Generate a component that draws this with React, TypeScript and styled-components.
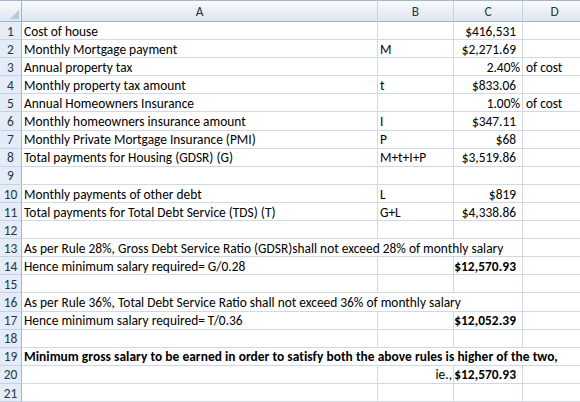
import React from "react";
import styled, { createGlobalStyle } from "styled-components";

const Global = createGlobalStyle`
  html, body { margin: 0; padding: 0; background: #ffffff; }
  body { width: 580px; height: 402px; overflow: hidden; }
`;

const FONT = `Carlito, Calibri, Lato, "Open Sans", sans-serif`;

const Sheet = styled.div`
  display: grid;
  grid-template-columns: 22px 356px 76px 69px 64px;
  grid-template-rows: 22px;
  grid-auto-rows: 18.1px;
  width: 587px;
  font-family: ${FONT};
  font-size: 13.4px;
  color: #000;
  background: #fff;
`;

const Corner = styled.div`
  position: relative;
  box-sizing: border-box;
  border-top: 1px solid #a2b8d2;
  border-right: 1px solid #9eb6ce;
  border-bottom: 1px solid #9eb6ce;
  background: linear-gradient(#f7f9fc, #dfe6f0);
  &::after {
    content: "";
    position: absolute;
    right: 2px;
    bottom: 2px;
    width: 0;
    height: 0;
    border-left: 9px solid transparent;
    border-bottom: 9px solid #b9c8da;
  }
`;

const ColHeader = styled.div`
  box-sizing: border-box;
  border-top: 1px solid #a2b8d2;
  border-right: 1px solid #c5d2e2;
  border-bottom: 1px solid #9eb6ce;
  background: linear-gradient(#f9fbfd, #dde5f0);
  display: flex;
  align-items: center;
  justify-content: center;
  color: #27364a;
  padding-top: 1px;
`;

const RowHeader = styled.div`
  box-sizing: border-box;
  background: #e4ecf7;
  border-right: 1px solid #9eb6ce;
  border-bottom: 1px solid #c4d3e6;
  display: flex;
  align-items: flex-end;
  justify-content: center;
  padding-bottom: 1px;
  color: #27364a;
  line-height: 1;
  height: 100%;
`;

const Cell = styled.div<{ $span?: number; $align?: "left" | "right"; $bold?: boolean; $pad?: number }>`
  box-sizing: border-box;
  grid-column: span ${(p) => p.$span ?? 1};
  border-right: 1px solid #d0d7e5;
  border-bottom: 1px solid #d0d7e5;
  display: flex;
  align-items: flex-end;
  justify-content: ${(p) => (p.$align === "right" ? "flex-end" : "flex-start")};
  padding: 0 ${(p) => (p.$align === "right" ? (p.$pad ?? 6) : 0)}px 1px ${(p) => (p.$align === "right" ? 0 : p.$pad ?? 2)}px;
  font-weight: ${(p) => (p.$bold ? 700 : 400)};
  letter-spacing: ${(p) => (p.$bold ? "0.05px" : "0")};
  white-space: nowrap;
  overflow: hidden;
  line-height: 1;
  height: 100%;
`;

type CellDef = { t?: string; span?: number; align?: "left" | "right"; bold?: boolean; pad?: number };

const rows: CellDef[][] = [
  [{ t: "Cost of house" }, {}, { t: "$416,531", align: "right" }, {}],
  [{ t: "Monthly Mortgage payment" }, { t: "M" }, { t: "$2,271.69", align: "right" }, {}],
  [{ t: "Annual property tax" }, {}, { t: "2.40%", align: "right", pad: 2 }, { t: "of cost", pad: 3 }],
  [{ t: "Monthly property tax amount" }, { t: "t" }, { t: "$833.06", align: "right" }, {}],
  [{ t: "Annual Homeowners Insurance" }, {}, { t: "1.00%", align: "right", pad: 2 }, { t: "of cost", pad: 3 }],
  [{ t: "Monthly homeowners insurance amount" }, { t: "I" }, { t: "$347.11", align: "right" }, {}],
  [{ t: "Monthly Private Mortgage Insurance (PMI)" }, { t: "P" }, { t: "$68", align: "right" }, {}],
  [{ t: "Total payments for Housing (GDSR)  (G)" }, { t: "M+t+I+P" }, { t: "$3,519.86", align: "right" }, {}],
  [{}, {}, {}, {}],
  [{ t: "Monthly payments of other debt" }, { t: "L" }, { t: "$819", align: "right" }, {}],
  [{ t: "Total payments for Total Debt Service (TDS) (T)" }, { t: "G+L" }, { t: "$4,338.86", align: "right" }, {}],
  [{}, {}, {}, {}],
  [{ t: "As per Rule 28%, Gross Debt Service Ratio (GDSR)shall not exceed 28% of monthly salary", span: 3 }, {}],
  [{ t: "Hence minimum salary required= G/0.28" }, {}, { t: "$12,570.93", align: "right", bold: true }, {}],
  [{}, {}, {}, {}],
  [{ t: "As per Rule 36%, Total Debt Service Ratio shall not exceed 36% of monthly salary", span: 3 }, {}],
  [{ t: "Hence minimum salary required= T/0.36" }, {}, { t: "$12,052.39", align: "right", bold: true }, {}],
  [{}, {}, {}, {}],
  [{ t: "Minimum gross salary to be earned in order to satisfy both the above rules is higher of the two,", span: 4, bold: true }],
  [{}, { t: "ie.,", align: "right", pad: 1 }, { t: "$12,570.93", align: "right", bold: true }, {}],
  [{}, {}, {}, {}],
];

export default function App() {
  return (
    <>
      <Global />
      <Sheet>
        <Corner />
        {["A", "B", "C", "D"].map((c) => (
          <ColHeader key={c}>{c}</ColHeader>
        ))}
        {rows.map((r, i) => (
          <React.Fragment key={i}>
            <RowHeader>{i + 1}</RowHeader>
            {r.map((c, j) => (
              <Cell key={j} $span={c.span} $align={c.align} $bold={c.bold} $pad={c.pad}>
                {c.t}
              </Cell>
            ))}
          </React.Fragment>
        ))}
      </Sheet>
    </>
  );
}
